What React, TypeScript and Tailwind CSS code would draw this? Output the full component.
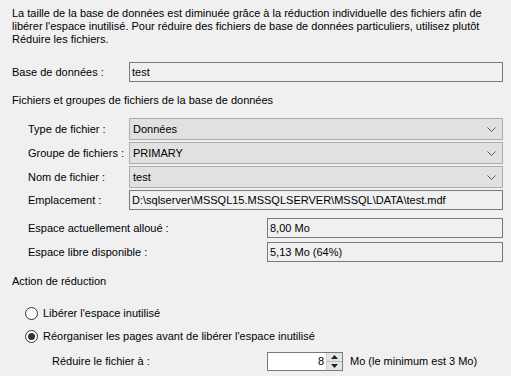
import React from 'react';

const Chevron = () => (
    <svg width="9" height="5" viewBox="0 0 9 5" className="shrink-0">
        <path d="M0.5 0.5 L4.5 4.5 L8.5 0.5" fill="none" stroke="#555" strokeWidth="1" />
    </svg>
);

const Combo = ({ label, value }: { label: string; value: string }) => (
    <div className="flex items-center h-[22px] pl-[28px]">
        <div className="w-[101px]">{label}</div>
        <div className="w-[374px] h-[22px] border border-[#adadad] bg-[#e1e1e1] flex items-center justify-between pl-[3px] pr-[6px]">
            <span>{value}</span>
            <Chevron />
        </div>
    </div>
);

const ReadOnly = ({ value, className }: { value: string; className: string }) => (
    <div className={`h-[20px] border border-[#7a7a7a] bg-[#f0f0f0] flex items-center pl-[2px] ${className}`}>
        {value}
    </div>
);

const Radio = ({ checked, label }: { checked: boolean; label: string }) => (
    <div className="flex items-center h-[16px] pl-[25px]">
        <div className="w-[13px] h-[13px] rounded-full border border-[#333] bg-white flex items-center justify-center">
            {checked && <div className="w-[7px] h-[7px] rounded-full bg-[#333]" />}
        </div>
        <span className="ml-[5px]">{label}</span>
    </div>
);

export default function App() {
    return (
        <div className="w-[511px] h-[376px] bg-[#f0f0f0] overflow-hidden text-[11px] leading-[13px] text-black font-['Liberation_Sans',Arial,sans-serif]">
            <p className="pt-[7px] pl-[12px]">
                La taille de la base de données est diminuée grâce à la réduction individuelle des fichiers afin de
                <br />
                libérer l'espace inutilisé. Pour réduire des fichiers de base de données particuliers, utilisez plutôt
                <br />
                Réduire les fichiers.
            </p>

            <div className="mt-[16px] flex items-center h-[20px] pl-[12px]">
                <div className="w-[117px]">Base de données :</div>
                <ReadOnly value="test" className="w-[374px]" />
            </div>

            <div className="mt-[12px] pl-[12px] h-[13px]">Fichiers et groupes de fichiers de la base de données</div>

            <div className="mt-[11px] flex flex-col gap-[2px]">
                <Combo label="Type de fichier :" value="Données" />
                <Combo label="Groupe de fichiers :" value="PRIMARY" />
                <Combo label="Nom de fichier :" value="test" />
                <div className="flex items-center h-[20px] pl-[28px]">
                    <div className="w-[101px]">Emplacement :</div>
                    <ReadOnly value="D:\sqlserver\MSSQL15.MSSQLSERVER\MSSQL\DATA\test.mdf" className="w-[374px]" />
                </div>
            </div>

            <div className="mt-[8px] flex items-center h-[20px] pl-[28px]">
                <div className="w-[239px]">Espace actuellement alloué :</div>
                <ReadOnly value="8,00 Mo" className="w-[236px]" />
            </div>
            <div className="mt-[4px] flex items-center h-[20px] pl-[28px]">
                <div className="w-[239px]">Espace libre disponible :</div>
                <ReadOnly value="5,13 Mo (64%)" className="w-[236px]" />
            </div>

            <div className="mt-[13px] pl-[12px] h-[13px]">Action de réduction</div>

            <div className="mt-[17px]">
                <Radio checked={false} label="Libérer l'espace inutilisé" />
            </div>
            <div className="mt-[7px]">
                <Radio checked label="Réorganiser les pages avant de libérer l'espace inutilisé" />
            </div>

            <div className="mt-[8px] flex items-center h-[19px] pl-[52px]">
                <div className="w-[215px]">Réduire le fichier à :</div>
                <div className="w-[76px] h-[19px] border border-[#7a7a7a] bg-white flex">
                    <div className="flex-1 flex items-center justify-end pr-[2px]">8</div>
                    <div className="w-[16px] flex flex-col border-l border-[#cfcfcf]">
                        <div className="flex-1 bg-[#e5e5e5] border-b border-[#bcbcbc] flex items-center justify-center">
                            <svg width="7" height="4" viewBox="0 0 7 4">
                                <path d="M0 4 L3.5 0 L7 4 Z" fill="#222" />
                            </svg>
                        </div>
                        <div className="flex-1 bg-[#e5e5e5] flex items-center justify-center">
                            <svg width="7" height="4" viewBox="0 0 7 4">
                                <path d="M0 0 L3.5 4 L7 0 Z" fill="#222" />
                            </svg>
                        </div>
                    </div>
                </div>
                <span className="ml-[7px]">Mo (le minimum est 3 Mo)</span>
            </div>
        </div>
    );
}
